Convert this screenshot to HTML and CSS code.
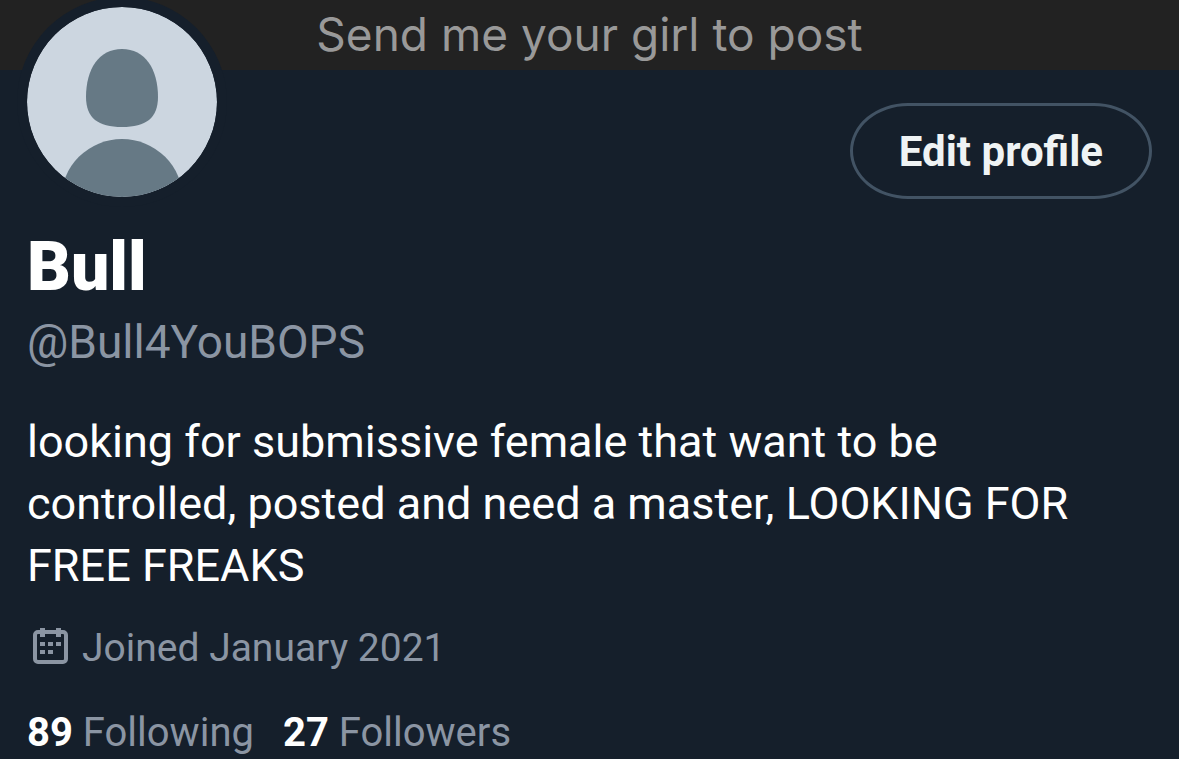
FILE: index.html
```html
<!DOCTYPE html>
<html lang="en">
<head>
    <meta charset="UTF-8">
    <meta name="viewport" content="width=device-width, initial-scale=1.0">
    <title>Bull (@Bull4YouBOPS)</title>
    <link rel="stylesheet" href="styles.css">
</head>
<body>
<div class="banner">Send me your girl to post</div>

<main class="profile">
    <div class="profile-header">
        <svg class="avatar" viewBox="0 0 190 190" role="img" aria-label="Default avatar">
            <defs>
                <clipPath id="avatar-clip"><circle cx="95" cy="95" r="95"/></clipPath>
            </defs>
            <g clip-path="url(#avatar-clip)">
                <rect width="190" height="190" fill="#ccd6e0"/>
                <path fill="#667985" d="M95 42c23 0 36 20 36 48 0 21-12 30-36 30S59 111 59 90c0-28 13-48 36-48z"/>
                <circle cx="95" cy="193" r="61" fill="#667985"/>
            </g>
        </svg>
        <button class="edit-button" type="button">Edit profile</button>
    </div>

    <h1 class="name">Bull</h1>
    <p class="handle">@Bull4YouBOPS</p>

    <p class="bio">looking for submissive female that want to be controlled, posted and need a master, LOOKING FOR FREE FREAKS</p>

    <div class="joined">
        <svg class="joined-icon" viewBox="0 0 46 46" aria-hidden="true">
            <rect x="8" y="7" width="31" height="30" rx="3" fill="none" stroke="currentColor" stroke-width="4"/>
            <path fill="currentColor" d="M13 3h5v9h-5zM29 3h5v9h-5zM13 17h5v4h-5zM21 17h5v4h-5zM29 17h5v4h-5zM13 25h5v4h-5zM21 25h5v4h-5z"/>
        </svg>
        <span>Joined January 2021</span>
    </div>

    <div class="stats">
        <a href="#following" class="stat"><strong>89</strong> Following</a>
        <a href="#followers" class="stat"><strong>27</strong> Followers</a>
    </div>
</main>
</body>
</html>
```
FILE: styles.css
```css
* {
    margin: 0;
    padding: 0;
    box-sizing: border-box;
}

body {
    background: #151f2b;
    color: #fff;
    font-family: Roboto, 'Liberation Sans', sans-serif;
}

.banner {
    height: 70px;
    background: #222;
    color: #999;
    font-family: Inter, sans-serif;
    font-weight: 400;
    font-size: 46px;
    line-height: 68px;
    text-align: center;
}

.profile {
    padding: 0 27px;
}

.profile-header {
    display: flex;
    justify-content: space-between;
    align-items: flex-end;
    height: 192px;
    margin-top: -63px;
}

.avatar {
    align-self: flex-start;
    width: 190px;
    height: 190px;
    border-radius: 50%;
    background: #151f2b;
    /* ring that cuts into the banner */
    box-shadow: 0 0 0 10px #151f2b;
}

.edit-button {
    height: 96px;
    padding: 0 46px;
    background: transparent;
    border: 3px solid #425364;
    border-radius: 58px / 48px;
    color: #eff3f4;
    font-family: inherit;
    font-weight: 700;
    font-size: 42px;
    cursor: pointer;
}

.name {
    margin-top: 30px;
    font-weight: 900;
    font-size: 68px;
    line-height: 76px;
}

.handle {
    margin-top: 8px;
    color: #8b95a3;
    font-size: 46px;
    line-height: 58px;
}

.bio {
    margin-top: 40px;
    font-size: 45px;
    line-height: 62px;
}

.joined {
    display: flex;
    align-items: center;
    gap: 9px;
    margin-top: 24px;
    color: #8b95a3;
    font-size: 39px;
    line-height: 54px;
}

.joined-icon {
    width: 46px;
    height: 46px;
}

.stats {
    display: flex;
    gap: 29px;
    margin-top: 31px;
    font-size: 40px;
    line-height: 54px;
}

.stat {
    color: #8b95a3;
    text-decoration: none;
}

.stat strong {
    color: #fff;
}
```
